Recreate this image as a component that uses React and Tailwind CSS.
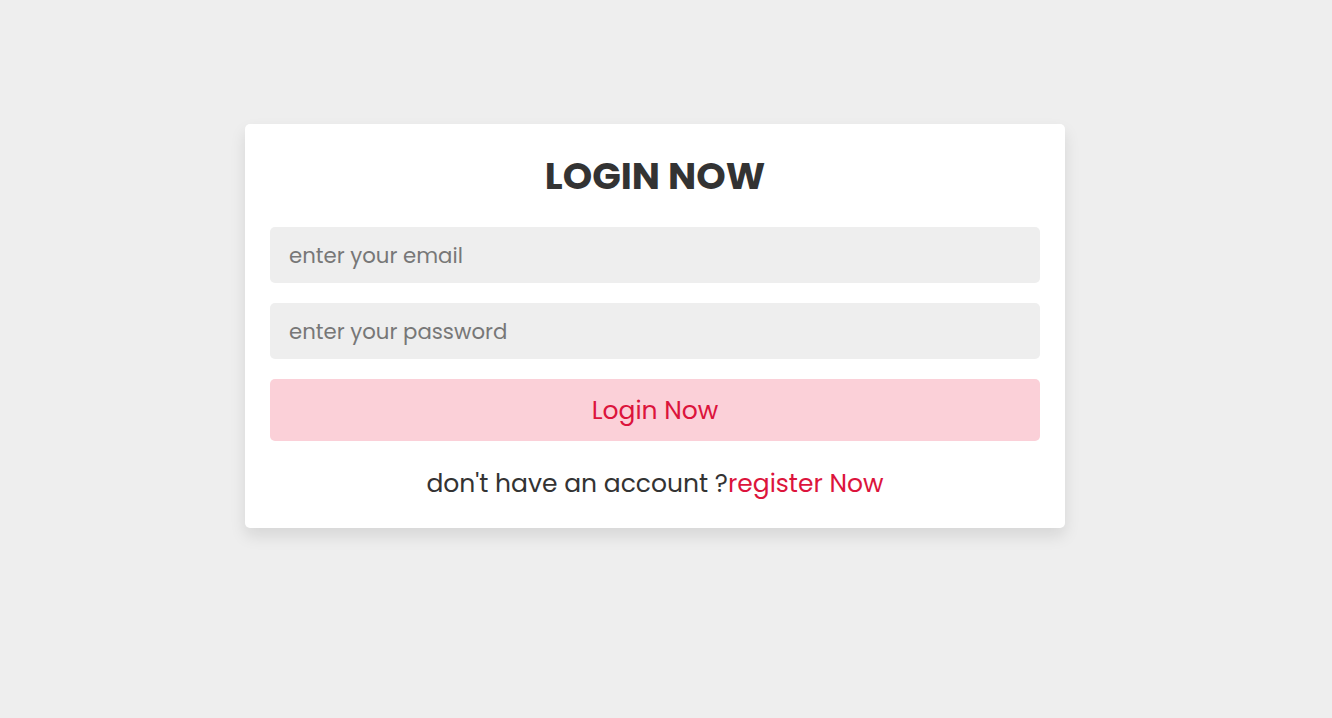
export default function App() {
  return (
    <div
      className="min-h-[718px] w-full bg-[#eeeeee] pt-[124px] pl-[245px]"
      style={{ fontFamily: 'Poppins, "Noto Sans", sans-serif' }}
    >
      <form className="w-[820px] rounded-[5px] bg-white px-[25px] pt-[24px] pb-[29px] text-center shadow-[0_8px_16px_rgba(0,0,0,0.1)]">
        <h3 className="h-[56px] text-[37.5px] leading-[56px] font-bold uppercase text-[#333333]">
          Login Now
        </h3>
        <div className="mt-[23px] flex flex-col gap-[20px]">
          <input
            type="email"
            placeholder="enter your email"
            className="h-[56px] w-full rounded-[5px] bg-[#eeeeee] px-[19px] text-[21.25px] text-[#333333] placeholder:text-[#777777] outline-none"
          />
          <input
            type="password"
            placeholder="enter your password"
            className="h-[56px] w-full rounded-[5px] bg-[#eeeeee] px-[19px] text-[21.25px] text-[#333333] placeholder:text-[#777777] outline-none"
          />
          <button
            type="button"
            className="h-[62px] w-full rounded-[5px] bg-[#fbd0d8] pt-[2px] text-[25px] text-[#dc143c]"
          >
            Login Now
          </button>
        </div>
        <p className="mt-[28px] text-[25px] leading-[30px] text-[#333333]">
          don't have an account ?<a href="#" className="text-[#dc143c]">register Now</a>
        </p>
      </form>
    </div>
  );
}
